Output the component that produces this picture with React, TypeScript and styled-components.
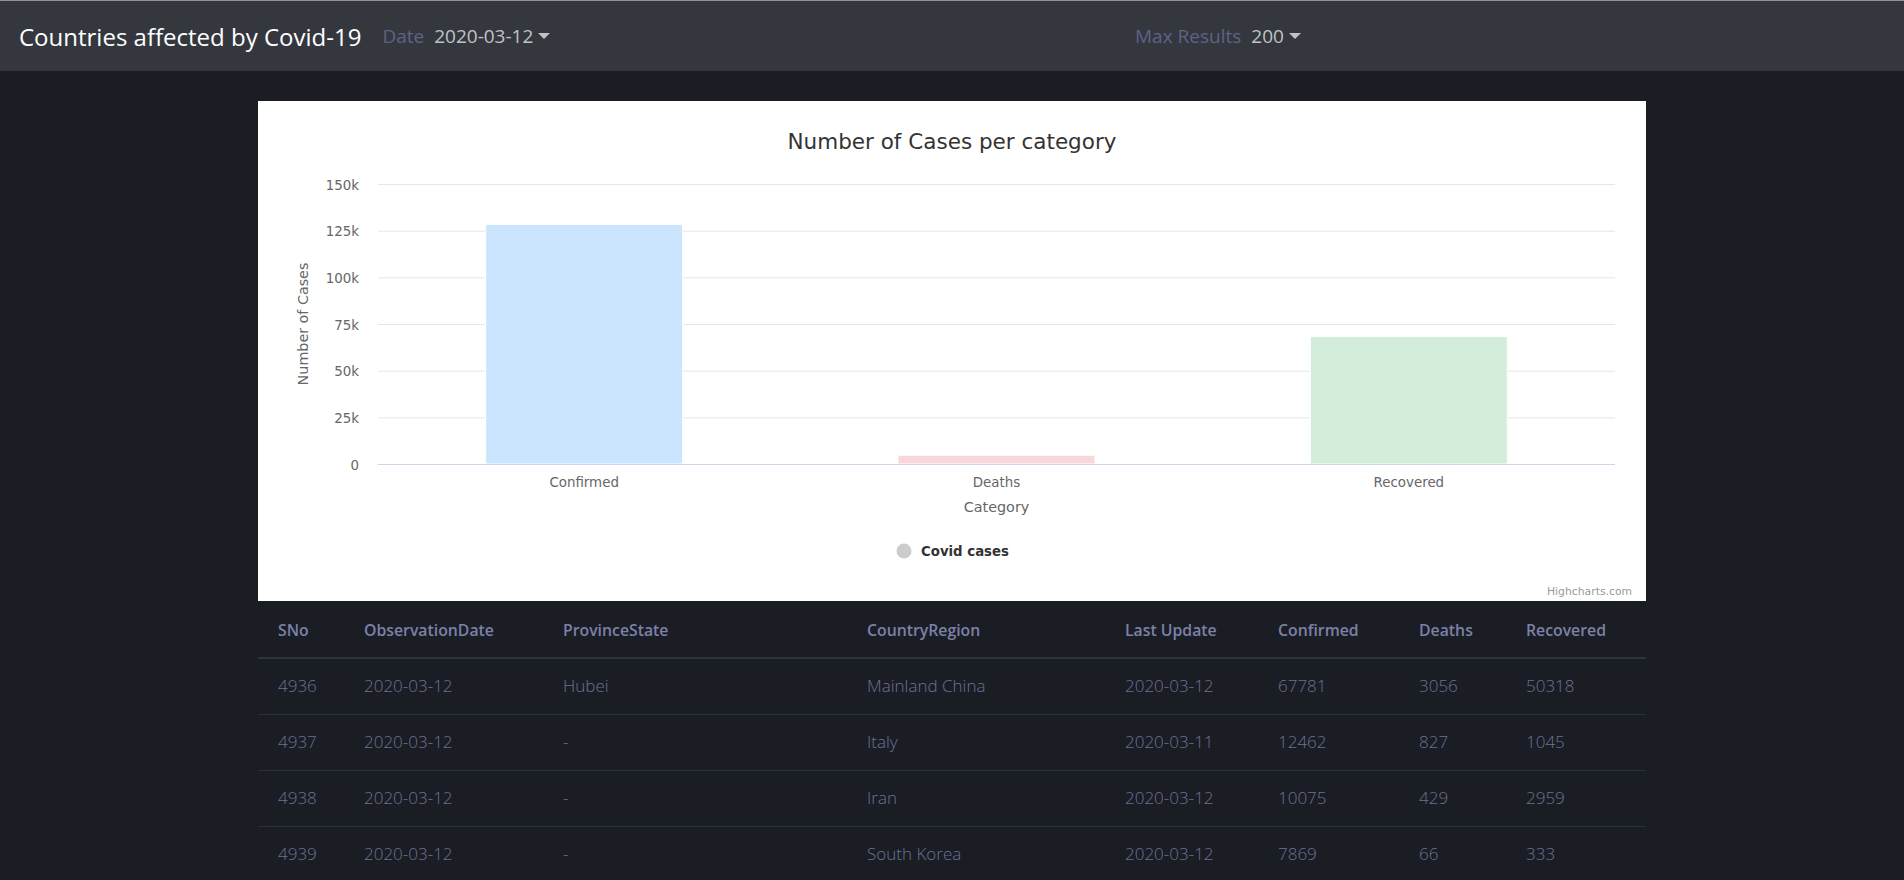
import React from "react";
import styled, { createGlobalStyle } from "styled-components";

const GlobalStyle = createGlobalStyle`
  html, body {
    margin: 0;
    padding: 0;
    background: #1b1d25;
  }
  body {
    font-family: "Open Sans", "Noto Sans", sans-serif;
  }
`;

const Page = styled.div`
  min-height: 100vh;
  background: #1b1d25;
`;

const Navbar = styled.header`
  box-sizing: border-box;
  height: 71px;
  display: flex;
  align-items: center;
  background: #34383e;
  border-top: 1px solid #8e9195;
`;

const NavLeft = styled.div`
  flex: 0 0 1135px;
  box-sizing: border-box;
  display: flex;
  align-items: center;
  padding-left: 19px;
`;

const Brand = styled.div`
  font-size: 24px;
  color: #ffffff;
  margin-right: 21px;
  white-space: nowrap;
`;

const NavItem = styled.div`
  display: flex;
  align-items: center;
  font-size: 19px;
  white-space: nowrap;
`;

const NavLabel = styled.span`
  color: #5d6387;
  margin-right: 10px;
`;

const DropdownToggle = styled.span`
  color: #c0c2c6;
  display: inline-flex;
  align-items: center;
  &::after {
    content: "";
    display: inline-block;
    margin-left: 5px;
    border-top: 6px solid #c0c2c6;
    border-left: 6px solid transparent;
    border-right: 6px solid transparent;
  }
`;

const Container = styled.main`
  width: 1388px;
  margin: 0 auto;
  padding-top: 30px;
`;

const ChartCard = styled.section`
  background: #ffffff;
  height: 500px;
  display: block;
`;

const ChartSvg = styled.svg`
  display: block;
  font-family: "DejaVu Sans", "Lucida Grande", sans-serif;
`;

const Table = styled.table`
  width: 100%;
  margin-top: 2px;
  border-collapse: separate;
  border-spacing: 0;
  table-layout: fixed;
`;

const Th = styled.th`
  text-align: left;
  padding: 12px 20px;
  line-height: 30px;
  font-size: 15.8px;
  font-weight: 600;
  color: #7b81a7;
  border-bottom: 2px solid #2e323b;
  white-space: nowrap;
`;

const Td = styled.td`
  padding: 12px 20px 13px;
  line-height: 30px;
  font-size: 17px;
  font-weight: 300;
  color: #6c7193;
  border-bottom: 1px solid #2b2f37;
  white-space: nowrap;
`;

const columns = [
  { key: "SNo", width: 86 },
  { key: "ObservationDate", width: 199 },
  { key: "ProvinceState", width: 304 },
  { key: "CountryRegion", width: 258 },
  { key: "Last Update", width: 153 },
  { key: "Confirmed", width: 141 },
  { key: "Deaths", width: 107 },
  { key: "Recovered", width: 140 },
];

const rows = [
  ["4936", "2020-03-12", "Hubei", "Mainland China", "2020-03-12", "67781", "3056", "50318"],
  ["4937", "2020-03-12", "-", "Italy", "2020-03-11", "12462", "827", "1045"],
  ["4938", "2020-03-12", "-", "Iran", "2020-03-12", "10075", "429", "2959"],
  ["4939", "2020-03-12", "-", "South Korea", "2020-03-12", "7869", "66", "333"],
];

const bars = [
  { label: "Confirmed", value: 128343, color: "#cce5ff" },
  { label: "Deaths", value: 4720, color: "#f8d7da" },
  { label: "Recovered", value: 68324, color: "#d4edda" },
];

const Chart: React.FC = () => {
  const plotLeft = 120;
  const plotRight = 1357;
  const plotTop = 83;
  const plotBottom = 363;
  const plotW = plotRight - plotLeft;
  const plotH = plotBottom - plotTop;
  const max = 150000;
  const ticks = [150000, 125000, 100000, 75000, 50000, 25000, 0];
  const catW = plotW / bars.length;
  const barW = 197;
  const fmt = (v: number) => (v === 0 ? "0" : `${v / 1000}k`);
  return (
    <ChartSvg width={1388} height={500} viewBox="0 0 1388 500">
      <text x={694} y={48} textAnchor="middle" fontSize={21.5} fill="#333333">
        Number of Cases per category
      </text>
      {ticks.map((t, i) => {
        const y = plotTop + (plotH * i) / (ticks.length - 1);
        return (
          <g key={t}>
            {t !== 0 && (
              <line x1={plotLeft} x2={plotRight} y1={y + 0.5} y2={y + 0.5} stroke="#e6e6e6" strokeWidth={1} />
            )}
            <text x={101} y={y + 5.5} textAnchor="end" fontSize={13.4} fill="#666666">
              {fmt(t)}
            </text>
          </g>
        );
      })}
      {bars.map((b, i) => {
        const h = (b.value / max) * plotH;
        const x = plotLeft + catW * i + (catW - barW) / 2;
        return (
          <g key={b.label}>
            <rect x={x} y={plotBottom - h} width={barW} height={h} fill={b.color} stroke="#ffffff" strokeWidth={1} />
            <text x={plotLeft + catW * i + catW / 2} y={386} textAnchor="middle" fontSize={13.4} fill="#666666">
              {b.label}
            </text>
          </g>
        );
      })}
      <line x1={plotLeft} x2={plotRight} y1={plotBottom + 0.5} y2={plotBottom + 0.5} stroke="#ccd6eb" strokeWidth={1} />
      <text x={plotLeft + plotW / 2} y={411} textAnchor="middle" fontSize={14.4} fill="#666666">
        Category
      </text>
      <text
        x={0}
        y={0}
        transform="translate(50 223) rotate(-90)"
        textAnchor="middle"
        fontSize={14.3}
        fill="#666666"
      >
        Number of Cases
      </text>
      <circle cx={646} cy={450} r={7.5} fill="#cccccc" />
      <text x={663} y={455} fontSize={13.3} fontWeight="bold" fill="#333333">
        Covid cases
      </text>
      <text x={1374} y={494} textAnchor="end" fontSize={10.8} fill="#999999">
        Highcharts.com
      </text>
    </ChartSvg>
  );
};

export default function App() {
  return (
    <Page>
      <GlobalStyle />
      <Navbar>
        <NavLeft>
          <Brand>Countries affected by Covid-19</Brand>
          <NavItem>
            <NavLabel>Date</NavLabel>
            <DropdownToggle>2020-03-12</DropdownToggle>
          </NavItem>
        </NavLeft>
        <NavItem>
          <NavLabel>Max Results</NavLabel>
          <DropdownToggle>200</DropdownToggle>
        </NavItem>
      </Navbar>
      <Container>
        <ChartCard>
          <Chart />
        </ChartCard>
        <Table>
          <colgroup>
            {columns.map((c) => (
              <col key={c.key} style={{ width: c.width }} />
            ))}
          </colgroup>
          <thead>
            <tr>
              {columns.map((c) => (
                <Th key={c.key}>{c.key}</Th>
              ))}
            </tr>
          </thead>
          <tbody>
            {rows.map((r) => (
              <tr key={r[0]}>
                {r.map((cell, i) => (
                  <Td key={i}>{cell}</Td>
                ))}
              </tr>
            ))}
          </tbody>
        </Table>
      </Container>
    </Page>
  );
}
